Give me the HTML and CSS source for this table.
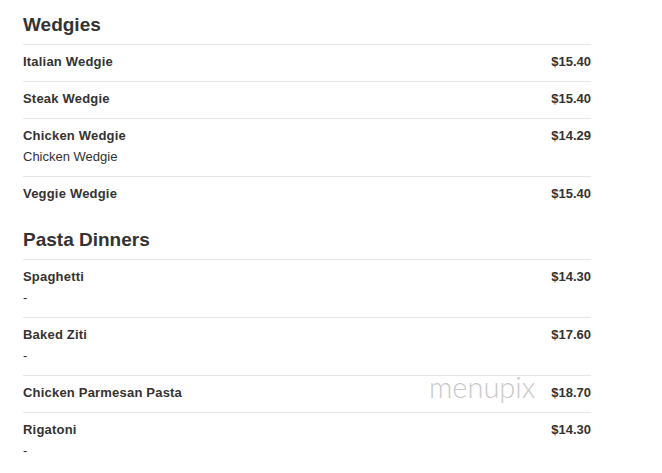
FILE: index.html
```html
<!DOCTYPE html>
<html>
<head>
<meta charset="utf-8">
<link rel="stylesheet" href="styles.css">
</head>
<body>
<div class="menu">
  <section class="section">
    <h2 class="section-title">Wedgies</h2>
    <div class="item">
      <div class="item-main"><div class="item-name">Italian Wedgie</div></div>
      <div class="item-price">$15.40</div>
    </div>
    <div class="item">
      <div class="item-main"><div class="item-name">Steak Wedgie</div></div>
      <div class="item-price">$15.40</div>
    </div>
    <div class="item">
      <div class="item-main"><div class="item-name">Chicken Wedgie</div><div class="item-desc">Chicken Wedgie</div></div>
      <div class="item-price">$14.29</div>
    </div>
    <div class="item">
      <div class="item-main"><div class="item-name">Veggie Wedgie</div></div>
      <div class="item-price">$15.40</div>
    </div>
  </section>
  <section class="section">
    <h2 class="section-title">Pasta Dinners</h2>
    <div class="item">
      <div class="item-main"><div class="item-name">Spaghetti</div><div class="item-desc">-</div></div>
      <div class="item-price">$14.30</div>
    </div>
    <div class="item">
      <div class="item-main"><div class="item-name">Baked Ziti</div><div class="item-desc">-</div></div>
      <div class="item-price">$17.60</div>
    </div>
    <div class="item">
      <div class="item-main"><div class="item-name">Chicken Parmesan Pasta</div></div>
      <div class="item-price">$18.70</div>
      <span class="watermark">menupix</span>
    </div>
    <div class="item">
      <div class="item-main"><div class="item-name">Rigatoni</div><div class="item-desc">-</div></div>
      <div class="item-price">$14.30</div>
    </div>
  </section>
</div>
</body>
</html>
```
FILE: styles.css
```css
html, body {
  margin: 0;
  padding: 0;
  background: #fff;
}
body {
  font-family: "Liberation Sans", Arial, sans-serif;
  color: #333;
  overflow: hidden;
}
.menu {
  width: 568px;
  margin-left: 23px;
  padding-top: 14px;
}
.section + .section {
  margin-top: 16px;
}
.section-title {
  margin: 0;
  font-size: 19px;
  line-height: 22px;
  font-weight: bold;
  padding-bottom: 8px;
  color: #333;
}
.item {
  position: relative;
  display: flex;
  justify-content: space-between;
  align-items: flex-start;
  border-top: 1px solid #e6e6e6;
  padding: 8px 0 10px;
}
.item-name, .item-price {
  font-size: 13px;
  line-height: 18px;
  font-weight: bold;
}
.item-name {
  letter-spacing: 0.2px;
}
.item-desc {
  font-size: 13px;
  line-height: 18px;
  margin-top: 3px;
}
.watermark {
  position: absolute;
  left: 406px;
  top: -7px;
  font-family: Lato, sans-serif;
  font-weight: 300;
  font-size: 29px;
  line-height: 36px;
  color: #c9c9c9;
}
```
